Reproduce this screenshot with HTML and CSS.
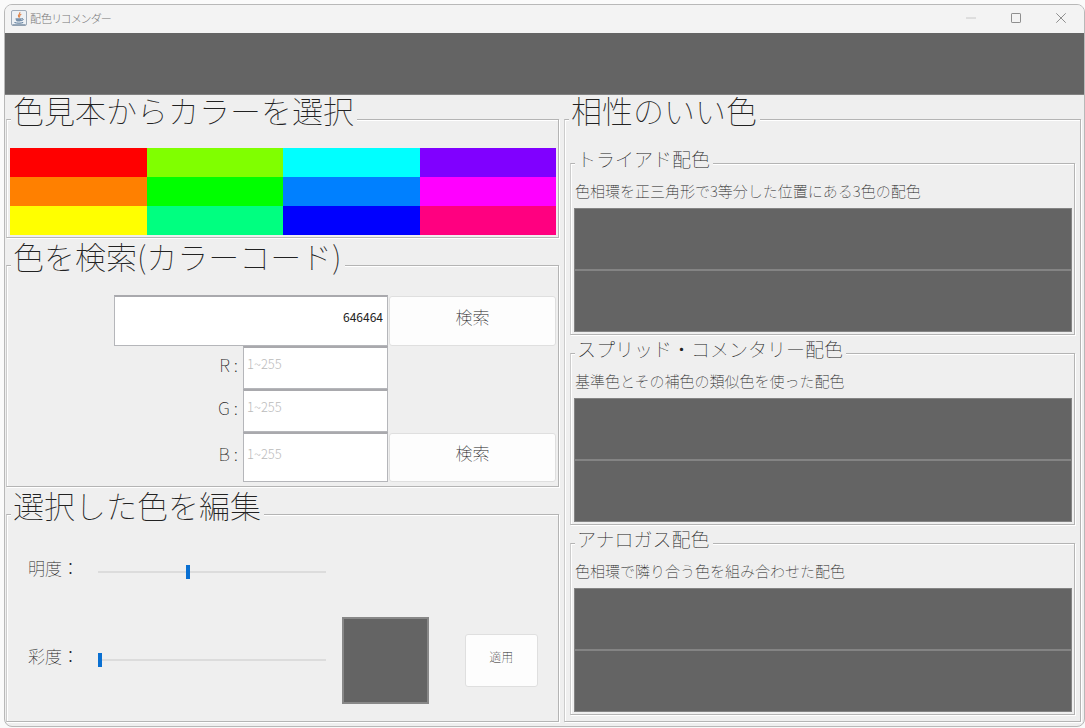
FILE: index.html
```html
<!DOCTYPE html>
<html lang="ja">
<head>
<meta charset="utf-8">
<title>配色リコメンダー</title>
<link rel="stylesheet" href="styles.css">
</head>
<body>
<div class="window">
  <header class="titlebar">
    <svg class="app-icon" viewBox="0 0 16 16" aria-hidden="true">
      <rect x=".5" y=".5" width="15" height="15" rx="1.5" fill="#edf1f5" stroke="#9eabb9"/>
      <path d="M1.5 14.8h13" stroke="#71889f"/>
      <path d="M8.7 2.2c1.3 1.7-2.3 2.4-1.2 4.2.4.6.8.9.7 1.5M10.3 4.3C8.500 5 8.300 5.800 8.900 6.700" fill="none" stroke="#df8145" stroke-width="1.100"/>
      <path d="M4.500 8.300h6.200c0 1.500-.5 2.700-1.600 3.100H6.200c-1.200-.4-1.700-1.600-1.700-3.100z" fill="#7891aa"/>
      <path d="M10.700 8.700c2.300-.4 1.700 1.800-.5 2M3.500 12.500c2.500.9 6.500.9 8.700 0" fill="none" stroke="#527396"/>
    </svg>
    <h1 class="app-name">配色リコメンダー</h1>
    <div class="window-controls">
      <button class="window-button" type="button" aria-label="最小化"><svg viewBox="0 0 12 12"><path d="M1 6h10" stroke="#c8c8c8"/></svg></button>
      <button class="window-button" type="button" aria-label="最大化"><svg viewBox="0 0 12 12"><rect x="1.500" y="1.500" width="9" height="9" rx=".6" stroke="#8e8e8e"/></svg></button>
      <button class="window-button" type="button" aria-label="閉じる"><svg viewBox="0 0 12 12"><path d="M1.300 1.300l9.400 9.400M10.700 1.300l-9.400 9.400" stroke="#8e8e8e"/></svg></button>
    </div>
  </header>
  <div class="banner"></div>
  <main class="content">
    <div class="tools">
      <fieldset class="group">
        <legend class="group-title">色見本からカラーを選択</legend>
        <div class="palette">
          <button class="chip red" type="button" aria-label="赤"></button>
          <button class="chip lime" type="button" aria-label="黄緑"></button>
          <button class="chip cyan" type="button" aria-label="水色"></button>
          <button class="chip violet" type="button" aria-label="紫"></button>
          <button class="chip orange" type="button" aria-label="橙"></button>
          <button class="chip green" type="button" aria-label="緑"></button>
          <button class="chip azure" type="button" aria-label="空色"></button>
          <button class="chip magenta" type="button" aria-label="赤紫"></button>
          <button class="chip yellow" type="button" aria-label="黄"></button>
          <button class="chip spring" type="button" aria-label="青緑"></button>
          <button class="chip blue" type="button" aria-label="青"></button>
          <button class="chip rose" type="button" aria-label="薔薇色"></button>
        </div>
      </fieldset>
      <fieldset class="group">
        <legend class="group-title">色を検索(カラーコード)</legend>
        <div class="search">
          <input class="field code" type="text" value="646464" aria-label="カラーコード">
          <button class="button code-search" type="button">検索</button>
          <label class="channel" for="r">R :</label>
          <input class="field value" id="r" type="text" placeholder="1~255">
          <label class="channel" for="g">G :</label>
          <input class="field value" id="g" type="text" placeholder="1~255">
          <label class="channel" for="b">B :</label>
          <input class="field value" id="b" type="text" placeholder="1~255">
          <button class="button" type="button">検索</button>
        </div>
      </fieldset>
      <fieldset class="group">
        <legend class="group-title">選択した色を編集</legend>
        <div class="edit">
          <label class="edit-label" for="brightness">明度：</label>
          <input class="slider" id="brightness" type="range" min="0" max="255" value="100">
          <label class="edit-label second" for="saturation">彩度：</label>
          <input class="slider second" id="saturation" type="range" min="0" max="255" value="0">
          <div class="preview"></div>
          <button class="button apply" type="button">適用</button>
        </div>
      </fieldset>
    </div>
    <fieldset class="group">
      <legend class="group-title">相性のいい色</legend>
      <div class="schemes">
        <fieldset class="group">
          <legend class="scheme-title">トライアド配色</legend>
          <p class="description">色相環を正三角形で3等分した位置にある3色の配色</p>
          <div class="tiles"><div class="tile"></div><div class="tile"></div></div>
        </fieldset>
        <fieldset class="group">
          <legend class="scheme-title">スプリッド・コメンタリー配色</legend>
          <p class="description">基準色とその補色の類似色を使った配色</p>
          <div class="tiles"><div class="tile"></div><div class="tile"></div></div>
        </fieldset>
        <fieldset class="group">
          <legend class="scheme-title">アナロガス配色</legend>
          <p class="description">色相環で隣り合う色を組み合わせた配色</p>
          <div class="tiles"><div class="tile"></div><div class="tile"></div></div>
        </fieldset>
      </div>
    </fieldset>
  </main>
</div>
</body>
</html>
```
FILE: styles.css
```css
* { box-sizing: border-box; }

body {
  margin: 0;
  padding: 4px 0 1px 4px;
  min-height: 100vh;
  display: flex;
  background: #fafafa;
  color: #222;
  font-family: "Noto Sans CJK JP", sans-serif;
  font-weight: 100;
}

button, input { font: inherit; color: inherit; margin: 0; }

.window {
  flex: 1;
  min-width: 0;
  display: flex;
  flex-direction: column;
  border: 1px solid #b8b8b8;
  border-radius: 8px;
  background: #efefef;
  overflow: hidden;
}

.titlebar {
  height: 28px;
  display: flex;
  align-items: center;
  padding: 0 1px 2px 6px;
  background: #f3f3f3;
}
.app-icon { width: 16px; height: 16px; margin-right: 3px; }
.app-name {
  margin: 0;
  font-size: 11px;
  line-height: 16px;
  font-weight: 300;
  font-feature-settings: "palt";
  color: #777;
}
.window-controls { margin-left: auto; display: flex; }
.window-button {
  width: 45px;
  height: 26px;
  padding: 0;
  border: 0;
  background: none;
  display: grid;
  place-items: center;
}
.window-button svg { width: 12px; height: 12px; fill: none; }

.banner { height: 62px; background: #646464; border-bottom: 1px solid #808080; }

.content {
  flex: 1;
  display: grid;
  grid-template-columns: 553fr 517fr;
  gap: 5px;
  padding: 0 3px 4px 1px;
}
.tools {
  display: grid;
  grid-template-rows: auto auto 1fr;
  gap: 3px;
}

.group {
  min-width: 0;
  margin: 0;
  padding: 0;
  border: 1px solid #b4b4b4;
  border-left-color: #ccc;
  box-shadow: inset 1px 1px #fff, 1px 1px #fff;
}
.group-title {
  margin-left: 4px;
  padding: 0 3px 18px 2px;
  background: #efefef;
  font-size: 31px;
  line-height: 30px;
  white-space: nowrap;
}

.palette {
  display: grid;
  grid-template-columns: repeat(4, 1fr);
  grid-auto-rows: 29px;
  padding: 5px 2px 2px 3px;
}
.chip { border: 0; padding: 0; }
.red { background: #f00; }
.lime { background: #80ff00; }
.cyan { background: #0ff; }
.violet { background: #8000ff; }
.orange { background: #ff8000; }
.green { background: #0f0; }
.azure { background: #0080ff; }
.magenta { background: #f0f; }
.yellow { background: #ff0; }
.spring { background: #00ff80; }
.blue { background: #00f; }
.rose { background: #ff0080; }

.search {
  display: grid;
  grid-template-columns: 107fr 129fr 145fr 168fr;
  grid-template-rows: 51px 43px 43px 50px;
  padding: 6px 2px 4px 0;
}
.field {
  width: 100%;
  min-width: 0;
  padding: 0 3px 9px;
  border: 1px solid #b5b6ba;
  border-top: 2px solid #a9a9ad;
  border-radius: 0;
  background: #fff;
}
.code { grid-column: 2 / 4; padding-right: 4px; text-align: right; font-size: 12px; font-weight: 400; }
.value { grid-column: 3; font-size: 13px; font-weight: 300; }
.value::placeholder { color: #bbb; opacity: 1; }
.channel {
  grid-column: 1 / 3;
  align-self: center;
  padding: 0 5px 8px 0;
  text-align: right;
  font-size: 18px;
  line-height: 28px;
}
.button {
  margin: 1px 0 0 1px;
  padding: 0 0 10px;
  border: 1px solid #dfdfdf;
  border-radius: 3px;
  background: #fdfdfd;
  font-size: 17px;
}

.edit {
  display: grid;
  grid-template-columns: 91px 226fr 16fr 87px 35fr 73px 20fr;
  grid-template-rows: 67px 110px;
  align-items: center;
}
.edit-label { grid-column: 1; padding: 0 0 8px 21px; font-size: 17px; line-height: 24px; white-space: nowrap; }
.slider {
  grid-column: 2;
  appearance: none;
  width: 100%;
  height: 16px;
  background: none;
}
.slider::-webkit-slider-runnable-track { height: 2px; background: #dcdcdc; }
.slider::-webkit-slider-thumb {
  appearance: none;
  width: 4px;
  height: 14px;
  margin-top: -6px;
  background: #0a70d2;
}
.second { grid-row: 2; }
.preview { grid-column: 4; grid-row: 2; height: 87px; background: #646464; border: 2px solid #888; }
.apply { grid-column: 6; grid-row: 2; height: 53px; margin: 0; padding-bottom: 8px; font-size: 12px; }

.schemes {
  height: 100%;
  display: grid;
  grid-template-rows: repeat(3, 1fr);
  gap: 4px;
  padding: 6px 5px;
}
.scheme-title {
  margin-left: 4px;
  padding: 0 3px 8px 2px;
  background: #efefef;
  font-size: 19px;
  line-height: 20px;
  white-space: nowrap;
}
.description { margin: 0; padding: 2px 0 5px 4px; font-size: 15px; line-height: 24px; }
.tiles { display: grid; padding: 0 2px 2px 3px; }
.tile { height: 62px; background: #646464; border: 1px solid #848484; }
```
